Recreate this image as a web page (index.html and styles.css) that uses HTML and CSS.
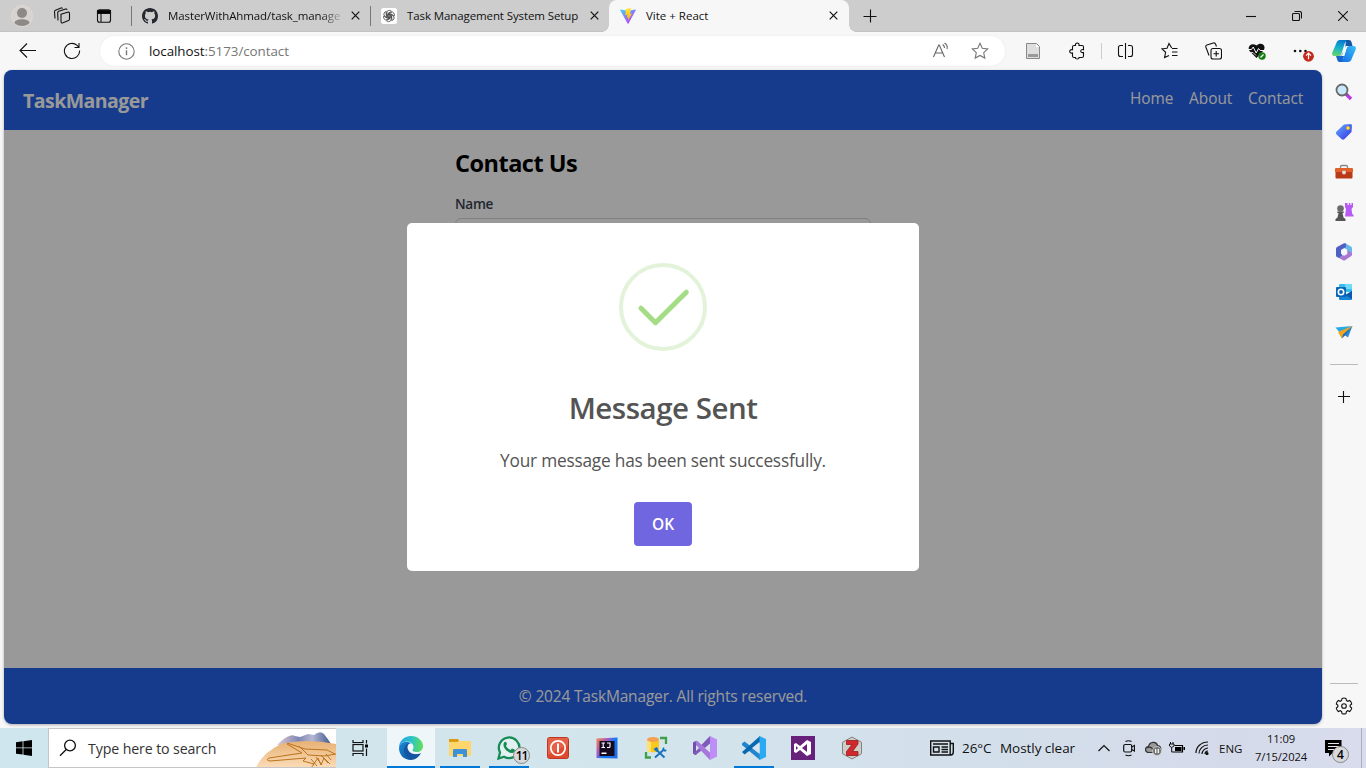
FILE: index.html
```html
<!DOCTYPE html>
<html lang="en">
<head>
<meta charset="utf-8">
<title>Vite + React</title>
<link rel="stylesheet" href="styles.css">
</head>
<body>
<div class="desktop">
  <div class="tabbar">
    <div class="cell profile"><svg width="22" height="22" viewBox="0 0 22 22"><circle cx="11" cy="11" r="10.5" fill="#d6d3d0" stroke="#dedbd7"/><circle cx="11" cy="8" r="5" fill="#8d8985"/><path d="M3.5 18c0-5 15-5 15 0-3.500 4-11.500 4-15 0z" fill="#8d8985"/></svg></div>
    <div class="cell spaces"><svg width="18" height="18" viewBox="0 0 18 18" class="line"><path d="M8 7.200l6.500-2q2-.5 2 1.300v5.500q0 1.200-1 1.600l-5.500 2.200q-2 .7-2-1.300zM8 7.200v7M5 13.500l-.3-7.500q0-1.300 1-1.700l7-2.300q1-.3 1.300.8M2 11.500L1.500 4.700q0-1 1-1.400L8 1q1.200-.4 1.500.6"/></svg></div>
    <div class="cell actions"><svg width="16" height="16" viewBox="0 0 16 16" class="line"><rect x="1.500" y="1.700" width="13" height="12.600" rx="2"/><path d="M1.500 2.500h13v3h-13z" fill="#000"/><path d="M5 5v9"/></svg></div>
    <div class="tab first">
      <svg width="16" height="16" viewBox="0 0 16 16"><path fill="#24292f" d="M8 0C3.580 0 0 3.580 0 8c0 3.540 2.290 6.530 5.470 7.590.4.070.55-.17.55-.38v-1.490c-2.010.37-2.530-.49-2.690-.94-.09-.23-.48-.94-.82-1.130-.28-.15-.68-.52-.01-.53.63-.01 1.080.58 1.230.82.72 1.210 1.870.87 2.330.66.070-.52.28-.87.51-1.070-1.780-.2-3.640-.89-3.640-3.950 0-.87.31-1.590.82-2.150-.08-.2-.36-1.020.08-2.120 0 0 .67-.21 2.200.82a7.600 7.600 0 0 1 4 0c1.530-1.040 2.200-.82 2.200-.82.44 1.100.16 1.920.08 2.120.51.56.82 1.270.82 2.150 0 3.070-1.870 3.750-3.650 3.950.29.25.54.73.54 1.480v2.200c0 .21.15.46.55.38A8 8 0 0 0 16 8c0-4.420-3.580-8-8-8z"/></svg>
      <span class="tab-title t1">MasterWithAhmad/task_manage</span>
      <svg class="close" width="9" height="9" viewBox="0 0 9 9"><path d="M.7.7l7.600 7.600M8.300.7L.7 8.300"/></svg>
    </div>
    <div class="tab second">
      <svg width="16" height="16" viewBox="0 0 16 16"><rect width="16" height="16" rx="2.500" fill="#fff"/><g fill="none" stroke="#333" stroke-width=".7"><path id="petal" d="M5.700 9.300V5.200Q5.700 2.300 8.200 2.300q1.500 0 2.300 1L7 5.400v4.200"/><use href="#petal" transform="rotate(60 8 8)"/><use href="#petal" transform="rotate(120 8 8)"/><use href="#petal" transform="rotate(180 8 8)"/><use href="#petal" transform="rotate(240 8 8)"/><use href="#petal" transform="rotate(300 8 8)"/></g></svg>
      <span class="tab-title t2">Task Management System Setup</span>
      <svg class="close" width="9" height="9" viewBox="0 0 9 9"><path d="M.7.7l7.600 7.600M8.300.7L.7 8.300"/></svg>
    </div>
    <div class="tab active">
      <svg width="16" height="16" viewBox="0 0 16 16"><defs><linearGradient id="v1" x1="0" y1="0" x2=".7" y2="1"><stop stop-color="#41d1ff"/><stop offset="1" stop-color="#bd34fe"/></linearGradient><linearGradient id="v2" x1="0" y1="0" x2="0" y2="1"><stop stop-color="#ffe83a"/><stop offset="1" stop-color="#ffa800"/></linearGradient></defs><path d="M.5 1.600l7.300 1.200 7.700-1.200q.6.100.3.700L8.500 15.500q-.5.700-.9 0L.2 2.300q-.2-.6.300-.7z" fill="url(#v1)"/><path d="M11.300 0L6 1q-.3.100-.3.400l-.4 5.800 2.100-.4-.6 3 1.600-.4-.8 4L12 5.600l-2 .3z" fill="url(#v2)"/></svg>
      <span class="tab-title">Vite + React</span>
      <svg class="close" width="9" height="9" viewBox="0 0 9 9"><path d="M.7.7l7.600 7.600M8.300.7L.7 8.300"/></svg>
    </div>
    <div class="newtab"><svg width="14" height="14" viewBox="0 0 14 14" class="line"><path d="M.5 7.500h13M7.500.5v13"/></svg></div>
    <div class="controls">
      <div class="control"><svg width="10" height="10" viewBox="0 0 10 10" class="line"><path d="M0 5.500h10"/></svg></div>
      <div class="control"><svg width="10" height="10" viewBox="0 0 10 10" class="line"><rect x=".5" y="2.500" width="7" height="7" rx="1"/><path d="M2.500.5h5q2 0 2 2v5"/></svg></div>
      <div class="control"><svg width="10" height="10" viewBox="0 0 10 10" class="line"><path d="M0 0l10 10M10 0L0 10"/></svg></div>
    </div>
  </div>

  <div class="toolbar">
    <div class="nav-cell"><svg width="18" height="16" viewBox="0 0 18 16" class="line"><path d="M17 7.500H1.500M8 .5l-7 7 7 7"/></svg></div>
    <div class="nav-cell"><svg width="18" height="18" viewBox="0 0 18 18" class="line"><path d="M16.600 8.500a7.600 7.600 0 1 1-2.500-5.200L16 5.500M16 1v4.500h-4.500"/></svg></div>
    <div class="address">
      <svg width="17" height="17" viewBox="0 0 17 17" class="line gray"><circle cx="8.500" cy="8.500" r="7.700"/><path d="M8.500 7.300v5M8.500 4.300v1.700" stroke-width="1.400"/></svg>
      <span class="url"><b>localhost</b>:5173/contact</span>
      <svg class="aloud" width="18" height="18" viewBox="0 0 18 18" class="line"><path d="M1.500 15L6.700 3h.6l5.200 12M3.400 11h7.200M10.500 2.500q2 1 2 3.500M12.500.9q3.500 2 2.500 6.100" fill="none" stroke="#666" stroke-width="1.100"/></svg>
      <svg width="18" height="18" viewBox="0 0 18 18" class="line gray"><path d="M9 1.300l2.300 5 5.400.6-4 3.700 1.100 5.500L9 13.400l-4.800 2.700 1.100-5.500-4-3.700 5.400-.6z"/></svg>
    </div>
    <div class="tool"><svg width="16" height="18" viewBox="0 0 16 18"><path d="M1.500 1.500h10l3 3v12h-13z" fill="#dedede" stroke="#888"/><path d="M11 2v3h3z" fill="#fff"/><path d="M3 12h10v3H3z" fill="#999"/></svg></div>
    <div class="tool"><svg width="18" height="18" viewBox="0 0 18 18" class="line"><path d="M6 3.500h1.500c-.8-3.300 4.300-3.300 3.500 0h3q1.500 0 1.500 1.500v2.700c-3.700-1-3.700 3.800 0 2.800V14q0 1.500-1.500 1.500h-3c.5 2-4 2-3.500 0H6q-1.500 0-1.500-1.500v-3C.8 12 .8 6.800 4.500 7.700V5q0-1.500 1.500-1.500z"/></svg></div>
    <div class="tool-sep"></div>
    <div class="tool"><svg width="17" height="18" viewBox="0 0 17 18" class="line"><path d="M6 3.500H3.500q-2 0-2 2v7q0 2 2 2H6M11 3.500h2.500q2 0 2 2v7q0 2-2 2H11M8.500 1v16"/></svg></div>
    <div class="tool"><svg width="18" height="18" viewBox="0 0 18 18" class="line"><path d="M11.700 6L9 1.500l-2 4.700-5 .6 3.600 3.500-1 5.300L9 13.400M12 6.500h5.500M12 10h5.500M12 13.500h5.500"/></svg></div>
    <div class="tool"><svg width="18" height="18" viewBox="0 0 18 18" class="line"><rect x="7" y="6.500" width="10.500" height="10.500" rx="2"/><path d="M12.200 9v5.500M9.500 11.700H15M5 13.500L3 8 1.900 5.200q-.5-1.700 1-2.200L9.300 1q1.700-.5 2.200 1l1 2.500"/></svg></div>
    <div class="tool"><svg width="18" height="18" viewBox="0 0 18 18"><path d="M8.500 16L1.500 9C-1.500 4 4 0 8.500 3.500 13-.500 19 3.500 15.500 8.500z" fill="#111"/><path d="M0 7.500h3.500l1.700-2.500 3 6L10.500 6.500l1.700 2H17" fill="none" stroke="#f7f7f7"/><path d="M3 10.500h2l3 3" fill="none" stroke="#f7f7f7" stroke-width=".8"/><circle cx="14" cy="14" r="3.700" fill="#107c10"/><path d="M12.500 15.500l3-3" stroke="#fff" stroke-width="1.200"/></svg></div>
    <div class="tool more"><svg width="24" height="22" viewBox="0 0 24 22"><g fill="#111"><circle cx="5" cy="11" r="1.300"/><circle cx="10.300" cy="11" r="1.300"/><circle cx="15.500" cy="11" r="1.300"/></g><circle cx="18.500" cy="16.300" r="5.400" fill="#c42b1c"/><path d="M18.500 19.300v-6M16 15.600l2.500-2.500 2.500 2.500" fill="none" stroke="#fff" stroke-width="1.200"/></svg></div>
    <div class="copilot"><svg width="24" height="22" viewBox="0 0 24 22"><defs><linearGradient id="c1" x1=".5" y1="0" x2=".3" y2="1"><stop stop-color="#0878cf"/><stop offset=".5" stop-color="#16b4c9"/><stop offset="1" stop-color="#6ad36c"/></linearGradient><linearGradient id="c2" x1="1" y1="0" x2="0" y2="1"><stop stop-color="#37bff4"/><stop offset="1" stop-color="#1268e8"/></linearGradient></defs><path d="M17 0H8Q5 0 4 4L.5 12Q-1 16 3 16h4q2 0 3-4l2.500-8Q14 0 17 0z" fill="url(#c1)"/><path d="M7 22h9q3 0 4-4l3.500-8Q25 6 21 6h-4q-2 0-3 4l-2.500 8Q10 22 7 22z" fill="url(#c2)"/><path d="M14 0h3q2 0 2.500 2l1 4H17q-3 0-4 4z" fill="#1458a8"/><path d="M10 22H7q-1.500 0-2-3l-1-3h4q2 0 3-4l1.500 3z" fill="#1666d0"/><path d="M13.700 6H17q-2 0-3 4l-1.700 6H9q1 0 2-3z" fill="#f3f9fd"/></svg></div>
  </div>

  <div class="browser">
    <div class="viewport">
      <header class="site-header"><h1 class="brand">TaskManager</h1><nav class="links"><a class="l1">Home</a><a class="l2">About</a><a class="l3">Contact</a></nav></header>
      <main class="content"><div class="form"><h2 class="heading">Contact Us</h2><label class="label">Name</label><div class="input"></div></div></main>
      <footer class="site-footer"><span>© 2024 TaskManager. All rights reserved.</span></footer>
      <div class="overlay">
        <div class="modal">
          <svg width="88" height="88" viewBox="0 0 88 88" fill="none"><circle cx="44" cy="44" r="42" stroke="#e2f3da" stroke-width="4"/><path d="M22 45.200l14.500 14.500L67.300 29.200" stroke="#a5dc86" stroke-width="5" stroke-linecap="round" stroke-linejoin="round"/></svg>
          <h2 class="modal-title">Message Sent</h2>
          <p class="modal-text">Your message has been sent successfully.</p>
          <button class="ok">OK</button>
        </div>
      </div>
    </div>
    <aside class="sidebar">
      <div class="side"><svg width="18" height="18" viewBox="0 0 18 18"><path d="M11 11l5 5" stroke="#bb35ef" stroke-width="3.400"/><path d="M10 10l2.500 2.500" stroke="#666" stroke-width="2"/><circle cx="7" cy="7" r="5.500" fill="#c9e9fb" stroke="#686868" stroke-width="1.800"/></svg></div>
      <div class="side"><svg width="18" height="18" viewBox="0 0 18 18"><defs><linearGradient id="tag" x1="0" y1="0" x2="1" y2="1"><stop stop-color="#64adfc"/><stop offset="1" stop-color="#3630e5"/></linearGradient></defs><path d="M9 1.500L15.500 1q1.500 0 1.500 1.500l-.5 6.500-7 7q-1.500 1.500-3 0L1.500 11.500q-1.500-1.500 0-3z" fill="url(#tag)"/><circle cx="13" cy="5" r="1.600" fill="#ffe57a" stroke="#d9a928"/></svg></div>
      <div class="side"><svg width="18" height="18" viewBox="0 0 18 18"><path d="M5.500 6V3.800q0-1.300 1.500-1.300h4q1.500 0 1.500 1.300V6" fill="none" stroke="#888" stroke-width="1.300"/><path d="M1 5h16q1 0 1 1v3H0V6q0-1 1-1z" fill="#e0602a"/><path d="M.5 9h17v5.500q0 1-1 1h-15q-1 0-1-1z" fill="#b83a16"/><circle cx="9" cy="9.500" r="2" fill="#ddd"/></svg></div>
      <div class="side"><svg width="20" height="20" viewBox="0 0 20 20"><path d="M12 1h1.500v2h1.300V1h1.500v2h1.200V1H19v4l-1.500 2 .7 5 1.300 1v1.500H11l1-7.500-1-2V1z" fill="#b95af5"/><circle cx="6.500" cy="6.500" r="3.300" fill="#6b6b6b"/><path d="M3.300 9.500h6.400V11H8.500l1 4.500 2 1.500v2h-10v-2l2-1.500 1-4.500H3.300z" fill="#555"/></svg></div>
      <div class="side"><svg width="18" height="18" viewBox="0 0 18 18"><path d="M10 0l6 3.500q1 .6 1 2V12l-5-1.500v-4L6 3.500z" fill="#67b8e6"/><path d="M17 11.500q0 1-1 1.700L10 17.300q-1 .6-2 0l-4.500-2.500 7-3.500L12 7l5 3z" fill="#a978d4"/><path d="M9 .3L2 4q-1 .7-1 2v6.500q0 1 1 1.500l2 1 4-3-2-2V7l5-3V1.500Q10.500 0 9 .3z" fill="#4f5fc4"/><path d="M6.200 7.300L9.300 5.500l3 1.800v3.600L9.300 12.700l-3.100-1.800z" fill="#f5f7fb"/></svg></div>
      <div class="side"><svg width="18" height="18" viewBox="0 0 18 18"><path d="M5 1h11q1 0 1 1v7H4V2q0-1 1-1z" fill="#36bdf0"/><path d="M10 1h7v5h-7z" fill="#73d9f8"/><path d="M4 8l7 4 6-4v8q0 1-1 1H5q-1 0-1-1z" fill="#1685d8"/><path d="M17 8v8l-7-4z" fill="#075aad"/><rect x="1" y="4" width="10" height="10" rx="1" fill="#0866b9"/><circle cx="6" cy="9" r="2.700" fill="none" stroke="#fff" stroke-width="1.600"/></svg></div>
      <div class="side"><svg width="18" height="18" viewBox="0 0 18 18"><path d="M.5 4.500L17.500 3 5 10z" fill="#27a9e1"/><path d="M17.500 3L13 14.500 8 11z" fill="#3189dc"/><path d="M17.500 3L3 9l2.500 4.500L7 15.500l2-4z" fill="#f3a51b"/><path d="M7 15.500l1-4 9-8-7 9z" fill="#1a6eb9"/></svg></div>
      <div class="side-rule"></div>
      <div class="side plus"><svg width="12" height="12" viewBox="0 0 12 12" class="line"><path d="M0 5.500h12M5.500 0v12"/></svg></div>
      <div class="side-rule bottom"></div>
      <div class="side gear"><svg width="18" height="18" viewBox="0 0 18 18" class="line"><circle cx="9" cy="9" r="2.300"/><path d="M7 1.500q2-1 4 0l.4 2 1.300.8 2-.8q1.700 1.300 2 3.500l-1.600 1.300v1.400l1.600 1.300q-.3 2.200-2 3.500l-2-.8-1.300.8-.4 2q-2 1-4 0l-.4-2-1.300-.8-2 .8q-1.700-1.300-2-3.500l1.600-1.300V8.300L1.300 7q.3-2.200 2-3.500l2 .8 1.300-.8z"/></svg></div>
    </aside>
  </div>

  <div class="taskbar">
    <div class="start"><svg width="16" height="16" viewBox="0 0 16 16"><path d="M0 2.200L6.600 1.300v6.200H0zM7.400 1.200L16 0v7.500H7.400zM0 8.300h6.600v6.300L0 13.700zM7.400 8.300H16V16l-8.600-1.200z"/></svg></div>
    <div class="search">
      <svg width="18" height="18" viewBox="0 0 18 18" class="line"><circle cx="11" cy="6.500" r="5.400" stroke-width="1.300"/><path d="M7.200 10.500L1 16.700" stroke-width="1.300"/></svg>
      <span class="search-text">Type here to search</span>
      <svg class="doodle" width="80" height="38" viewBox="0 0 80 38"><defs><linearGradient id="hill" x1="0" y1="0" x2="1" y2="0"><stop stop-color="#e0cbd0"/><stop offset=".4" stop-color="#7e86b5"/><stop offset=".65" stop-color="#b5b7d4"/><stop offset="1" stop-color="#41588e"/></linearGradient><linearGradient id="sand" x1="0" y1="0" x2="0" y2="1"><stop stop-color="#e8b173"/><stop offset="1" stop-color="#fbdcb9"/></linearGradient></defs><path d="M21 15q7-7 10-8 5-3 8-1l5 1 8-3 6 1q6-5 10-1 4 5 7 10z" fill="url(#hill)"/><path d="M0 38Q5 24 25 14 50 8 80 14v24z" fill="url(#sand)"/><path d="M31 13l18 6 22 1 8 4M31 14l15 9-33 5q-4 2 1 3l36-3-3 3 11 3-3 4M43 16l9 9 16 1 12-2M55 29l6 7M60 27l6 8M65 25l7 8M70 24l5 6M57 35l5-7 3 7 3-7 6 6" fill="none" stroke="#bb741c" stroke-width="1"/></svg>
    </div>
    <div class="start"><svg width="17" height="16" viewBox="0 0 17 16" class="line"><path d="M1 0v2.500h10V0M1 16v-2.500h10V16M14.500 0v3.500M14.500 8.500V16" stroke-width="1.200"/><rect x="1" y="4.500" width="10" height="6.500" stroke-width="1.200"/><path d="M13 4.500h3v3h-3z" fill="#000" stroke="none"/></svg></div>
    <div class="apps">
      <div class="app current"><svg width="24" height="24" viewBox="0 0 24 24"><defs><linearGradient id="e1" x1="0" y1=".4" x2="1" y2=".5"><stop stop-color="#269fe8"/><stop offset=".5" stop-color="#2bc4c8"/><stop offset="1" stop-color="#62dd55"/></linearGradient><linearGradient id="e2" x1="0" y1="0" x2="1" y2="1"><stop stop-color="#198ada"/><stop offset="1" stop-color="#0c468b"/></linearGradient></defs><path d="M0 12C0 5 5 0 12 0s12 5 12 10c0 4-3 6-6.500 6-3 0-4-1-4-2s1-1 1-3c0-3-3-5.500-7-5.500C4 5.500 1 8 0 12z" fill="url(#e1)"/><path d="M0 12C1 6 8 4 12 7.500c-4 0-5 4-3.500 7C10 18 16 20 22 17c-2 4-6 7-10 7C5 24 0 19 0 12z" fill="url(#e2)"/><path d="M5 14c0-3 2-6 5-7-4 5 0 13 11 11-2 3-5 5-7 5-5 0-9-4-9-9z" fill="#1556a3"/></svg></div>
      <div class="app open"><svg width="22" height="20" viewBox="0 0 22 20"><path d="M0 2q0-1 1-1h8l1.500 2H21q1 0 1 1v13q0 1-1 1H0z" fill="#fed66b"/><path d="M0 1h9l1 2-2 1H0z" fill="#d99b14"/><path d="M4 19v-7q0-1 1-1h12q1 0 1 1v7h-4v-3H8v3z" fill="#3d91db"/></svg></div>
      <div class="app open wa"><svg width="24" height="24" viewBox="0 0 24 24"><path d="M1.500 22.500l1.500-6a10.300 10.300 0 1 1 4 4.200z" fill="#e3f0f2" stroke="#168b54" stroke-width="2.300"/><path d="M7.500 6q1.700-1 2.500 2l-1 2q1.500 3 4.500 4l1.500-1.500q2.500.5 3 1.500 0 3-3 3C10 17 4 10 7.500 6z" fill="#168b54"/></svg><span class="badge">11</span></div>
      <div class="app"><svg width="22" height="22" viewBox="0 0 22 22"><rect x=".5" y=".5" width="21" height="21" rx="2" fill="#df492d" stroke="#bd3824"/><path d="M1 1h20v7L1 18z" fill="#ed7158" opacity=".55"/><circle cx="11" cy="11" r="7.200" fill="none" stroke="#fff" stroke-width="1.700"/><path d="M11 6.500v9" stroke="#fff" stroke-width="2"/></svg></div>
      <div class="app"><svg width="22" height="22" viewBox="0 0 22 22"><defs><linearGradient id="ij" x1="0" y1="0" x2="1" y2=".7"><stop stop-color="#fb8640"/><stop offset=".4" stop-color="#a55ac3"/><stop offset=".65" stop-color="#087cfa"/><stop offset="1" stop-color="#266de5"/></linearGradient></defs><path d="M.5 1.500L21.500.5v21L.5 21z" fill="url(#ij)"/><path d="M3.500 4h15v15h-15z" fill="#160a20"/><path d="M5.500 6h3.500M7.200 6v4.500M5.500 10.500h3.500M11 6h3v3.500q0 1-1 1h-2" fill="none" stroke="#fff" stroke-width="1.100"/><path d="M5.500 15.500h5v1.500h-5z" fill="#fff"/></svg></div>
      <div class="app"><svg width="24" height="24" viewBox="0 0 24 24"><path d="M16 2h6v6M7 21.500H2V16" fill="none" stroke="#3fa04b" stroke-width="2.300"/><path d="M3 4v10c0 3 12 3 12 0V4z" fill="#fbc91e"/><path d="M3 4v10c0 1.500 2 2 4 2.300V6z" fill="#ffe170"/><ellipse cx="9" cy="3.500" rx="6" ry="2.500" fill="#f4a052"/><path d="M12 13.500l8.500 8M20 13.500L11 21.500" stroke="#1773bd" stroke-width="1.900"/><path d="M9.500 13l3-2 2 2-2 3zM18 13l2-2 .5 2.500L23 14l-2 2z" fill="#1773bd"/></svg></div>
      <div class="app"><svg width="24" height="24" viewBox="0 0 24 24"><path d="M0 6.500L2.500 5 4 6v12l-1.500 1L0 17.500z" fill="#7150ad"/><path d="M2.500 19L0 17.500 3.500 14 17 0l1.500 7z" fill="#7f5abb"/><path d="M2.500 5Q4 4 5.500 6L18 17l-1 7L3.500 10z" fill="#a877dd"/><path d="M17 0l7 3.500v17L17 24z" fill="#bd8ef6"/><path d="M17 7.500v9L12 12zM3 9l3 3-3 3z" fill="#d6e2ec"/></svg></div>
      <div class="app open"><svg width="24" height="24" viewBox="0 0 24 24"><path d="M0 7.500L2.500 5.500 19 18l-1 6L0 9z" fill="#2185cf"/><path d="M0 16L18 0l1 6L2.500 18.500z" fill="#0869b1"/><path d="M17.500 0l6.500 3v18l-6.500 3z" fill="#29aaf2"/><path d="M17.500 6v12L10 12z" fill="#d8e4ef"/></svg></div>
      <div class="app"><svg width="24" height="24" viewBox="0 0 24 24"><path d="M0 0h24v24H0z" fill="#68217a"/><path d="M3 8l2-1 4 3 7-6 4 2v12l-4 2-7-6-4 3-2-1zM5 10v4l2-2zM11 12l5 4V8z" fill="#fff" fill-rule="evenodd"/></svg></div>
      <div class="app"><svg width="22" height="24" viewBox="0 0 22 24"><path d="M11 1l9.500 5.300v11.400L11 23 1.500 17.700V6.300z" fill="#cfcdc8" stroke="#85817b"/><path d="M5.500 4.500h11.500V8l-5.500 7.500H17v4H5.500v-4L11 8.500H5.500z" fill="#d2272d" stroke="#942020" stroke-width=".8"/></svg></div>
    </div>
    <div class="weather"><svg width="24" height="16" viewBox="0 0 24 16" class="line"><path d="M.7 1h19.500v14H.7zM20.500 3.500h2.800V12q0 3-2.500 3H5M3 4h15M11.500 7H18M11.500 9.500H18M11.500 12H18M3.500 7h5.500v5H3.500z" stroke-width="1.400"/></svg><span class="temp">26°C</span><span class="sky">Mostly clear</span></div>
    <div class="tray">
      <svg class="i1" width="12" height="8" viewBox="0 0 12 8"><path d="M.5 7L6 1.500 11.500 7"/></svg>
      <svg class="i2" width="12" height="17" viewBox="0 0 12 17"><rect x=".7" y="4.500" width="8" height="7.500" rx="1.500"/><path d="M8.700 7l2.800-1.500v5.500L8.700 9.500M2.500 1.500q3-1.500 6 0M2.500 15q3 1.500 6 0"/></svg>
      <svg class="i3" width="17" height="15" viewBox="0 0 17 15"><path d="M4 11.500C-1 11 0 5.500 3.500 5.500c1-5 8-5.500 9-1 4 0 4.500 6 1 7z" fill="#999" stroke="#333"/><path d="M1.500 7q4-2 6 1L13 6" stroke="#333"/><circle cx="12" cy="10" r="4.500" fill="#777" stroke="#ddd" stroke-width=".7"/><path d="M10.700 8v4M13.300 8v4" stroke="#fff" stroke-width="1.200"/></svg>
      <svg class="i4" width="16" height="13" viewBox="0 0 16 13"><path d="M5.500 3.500h8V10H5" stroke="#000"/><path d="M6 5h6.500v4H6zM14.500 5h1.500v3h-1.500z" fill="#000" stroke="none"/><path d="M1.500 0v2M4 0v2M.5 2h4.500v2L2.700 5.500.5 4zM2.700 5.500V10H5" stroke-width="1"/></svg>
      <svg class="i5" width="14" height="14" viewBox="0 0 14 14"><path d="M1 12C1 6 6 1 13 1M4 12.500C4 8 8 4 13 4M7 13c0-3 3-6 6-6M10 13q0-3 3-3"/><circle cx="12" cy="12.500" r="1" fill="#000"/></svg>
      <span class="eng">ENG</span>
      <div class="clock"><span class="time">11:09</span><span class="date">7/15/2024</span></div>
      <div class="notice"><svg width="17" height="17" viewBox="0 0 17 17"><path d="M0 0h16.500v13h-9L4 16.500V13H0z" fill="#000" stroke="none"/><path d="M3 3.500h11M3 6.500h11M3 9.500h8" stroke="#e4e7ee"/></svg><span class="badge">4</span></div>
      <div class="peek"></div>
    </div>
  </div>
</div>
</body>
</html>
```
FILE: styles.css
```css
* { box-sizing: border-box; }
body, h1, h2, p { margin: 0; }
body { width: 1366px; height: 768px; overflow: hidden; background: #f7f7f7; font-family: "Open Sans", "Noto Sans", sans-serif; color: #111; }
svg { display: block; flex: none; }
span, h1, h2, a, p { white-space: nowrap; }
.line { fill: none; stroke: #111; stroke-width: 1.1; }
.line.gray { stroke: #777; }
.desktop { display: flex; flex-direction: column; height: 768px; }

.tabbar { display: flex; align-items: center; height: 32px; flex: none; background: #cdcdcd; border-bottom: 1px solid #c3c3c3; }
.cell { display: flex; justify-content: center; width: 40px; }
.profile { width: 44px; }
.spaces { width: 36px; }
.actions { width: 48px; }
.tab { display: flex; align-items: center; height: 32px; font-size: 11.5px; }
.tab-title { width: 173px; margin-left: 10px; margin-right: 10px; line-height: 20px; flex: none; }
.first { width: 239px; padding-left: 11px; position: relative; margin-left: 3px; }
.first::before { content: ""; width: 1px; height: 20px; background: #777; position: absolute; left: 0; top: 6px; }
.second { width: 239px; padding-left: 11px; position: relative; }
.second::before { content: ""; width: 1px; height: 20px; background: #777; position: absolute; left: 0; top: 6px; }
.t1 { letter-spacing: -.1px; -webkit-mask-image: linear-gradient(90deg, #000 88%, rgba(0,0,0,.15)); mask-image: linear-gradient(90deg, #000 88%, rgba(0,0,0,.15)); }
.t2 { letter-spacing: -.1px; }
.close { fill: none; stroke: #111; stroke-width: 1.2; }
.active { width: 240px; padding-left: 11px; background: #f7f7f7; border-radius: 8px 8px 0 0; position: relative; }
.active::before, .active::after { content: ""; position: absolute; bottom: 0; width: 7px; height: 7px; }
.active::before { left: -7px; background: radial-gradient(circle at 0 0, transparent 6.500px, #f7f7f7 7px); }
.active::after { right: -7px; background: radial-gradient(circle at 100% 0, transparent 6.500px, #f7f7f7 7px); }
.newtab { margin-left: 14px; }
.controls { display: flex; margin-left: auto; }
.control { display: flex; justify-content: center; width: 46px; }

.toolbar { display: flex; align-items: center; height: 38px; flex: none; background: #f7f7f7; }
.nav-cell { display: flex; justify-content: center; width: 44px; }
.nav-cell:first-child { margin-left: 6px; }
.address { display: flex; align-items: center; width: 905px; height: 30px; margin: 0 6px; padding: 0 16px 0 18px; border-radius: 15px; background: #fff; box-shadow: 0 0 3px rgba(0,0,0,.06); }
.url { margin-left: 14px; font-size: 13.400px; letter-spacing: -.06px; color: #767676; line-height: 20px; }
.url b { font-weight: 400; color: #111; }
.aloud { margin-left: auto; margin-right: 21px; }
.tool { display: flex; justify-content: center; width: 44px; }
.tool-sep { width: 1px; height: 16px; margin: 0 1px 0 2px; background: #ccc; }
.more { padding-left: 2px; margin-right: 1px; }
.copilot { width: 40px; display: flex; justify-content: center; }

.browser { display: flex; height: 658px; flex: none; }
.viewport { position: relative; display: flex; flex-direction: column; width: 1318px; height: 654px; margin-left: 4px; border-radius: 8px; overflow: hidden; background: #fff; box-shadow: 0 1px 3px rgba(0,0,0,.3); }
.site-header { display: flex; justify-content: space-between; align-items: center; height: 60px; padding: 0 19px; background: #2563eb; color: #fff; }
.brand { font-size: 19.500px; line-height: 28px; font-weight: 700; padding-top: 2px; letter-spacing: -.54px; }
.links { display: flex; gap: 16px; font-size: 15.400px; line-height: 24px; padding-bottom: 2px; }
.l1 { width: 43px; } .l2 { width: 43px; } .l3 { width: 55px; }
.content { flex: 1; display: flex; justify-content: center; padding-top: 15px; }
.form { width: 416px; }
.heading { font-size: 23.500px; line-height: 32px; margin-bottom: 15px; padding-top: 2px; color: #000; letter-spacing: -.5px; }
.label { display: block; font-size: 13.600px; line-height: 20px; font-weight: 600; letter-spacing: -.3px; color: #374151; }
.input { height: 42px; margin-top: 4px; border: 1px solid #d1d5db; border-radius: 6px; }
.site-footer { display: flex; align-items: center; justify-content: center; height: 56px; background: #2563eb; color: #fff; font-size: 15.500px; letter-spacing: -.18px; }
.overlay { position: absolute; inset: 0; display: flex; align-items: center; justify-content: center; background: rgba(0,0,0,.4); }
.modal { display: flex; flex-direction: column; align-items: center; width: 512px; height: 348px; padding-top: 40px; border-radius: 5px; background: #fff; color: #545454; }
.modal-title { margin-top: 39px; font-size: 29.500px; font-weight: 600; line-height: 36px; letter-spacing: -.5px; }
.modal-text { margin-top: 21px; font-size: 17.300px; letter-spacing: -.22px; line-height: 28px; }
.ok { width: 58px; height: 44px; margin-top: 27px; padding: 0; border: 0; border-radius: 4px; background: #7066e0; color: #fff; font: 600 15.500px "Open Sans", sans-serif; }

.sidebar { width: 44px; display: flex; flex-direction: column; align-items: center; padding-top: 2px; }
.side { height: 40px; width: 40px; display: flex; align-items: center; justify-content: center; flex: none; }
.side-rule { width: 28px; height: 1px; flex: none; background: #bbb; margin-top: 12px; }
.plus { margin-top: 12px; }
.bottom { margin-top: auto; }
.gear { height: 44px; }

.taskbar { display: flex; height: 40px; flex: none; background: linear-gradient(90deg, #cfe6ee 0, #d3e4ec 50%, #d3dfeb 72%, #d5daea 90%, #d8dcec); }
.start { width: 48px; display: flex; align-items: center; justify-content: center; }
.search { display: flex; align-items: center; width: 288px; background: #fff; border: 1px solid #c5c5c5; border-right-width: 0; padding-left: 10px; overflow: hidden; }
.search-text { margin-left: 11px; width: 168px; font-size: 14.200px; letter-spacing: -.12px; color: #333; }
.doodle { margin-top: 1px; }
.apps { display: flex; gap: 1px; margin-left: 3px; }
.app { position: relative; width: 48px; display: flex; align-items: center; justify-content: center; }
.app.open::after, .app.current::after { content: ""; position: absolute; left: 4px; right: 4px; bottom: 0; height: 2px; background: #0078d7; }
.app.current { background: #eef6fa; }
.app.current::after { left: 0; right: 0; }
.badge { position: absolute; width: 17px; height: 17px; border: 1px solid #888; border-radius: 9px; background: #d7d9dc; font-size: 12px; line-height: 15px; text-align: center; color: #000; font-weight: 600; }
.wa .badge { left: 28px; top: 19px; letter-spacing: -1px; }
.weather { display: flex; align-items: center; margin-left: 54px; font-size: 13.500px; letter-spacing: -.05px; }
.temp { margin-left: 8px; width: 38px; }
.sky { width: 80px; }
.tray { display: flex; align-items: center; margin-left: auto; }
.tray svg { fill: none; stroke: #111; stroke-width: 1.2; }
.i1 { margin-right: 13px; } .i2 { margin-right: 10px; } .i3 { margin-right: 7px; } .i4 { margin-right: 10px; } .i5 { margin-right: 10px; }
.eng { width: 24px; font-size: 11.500px; }
.clock { width: 76px; display: flex; flex-direction: column; align-items: center; font-size: 11.200px; letter-spacing: -.1px; line-height: 18px; }
.notice { position: relative; width: 42px; padding-left: 6px; }
.notice .badge { left: 13px; top: 6px; }
.peek { width: 5px; height: 40px; border-left: 1px solid #aab0bf; }
```
